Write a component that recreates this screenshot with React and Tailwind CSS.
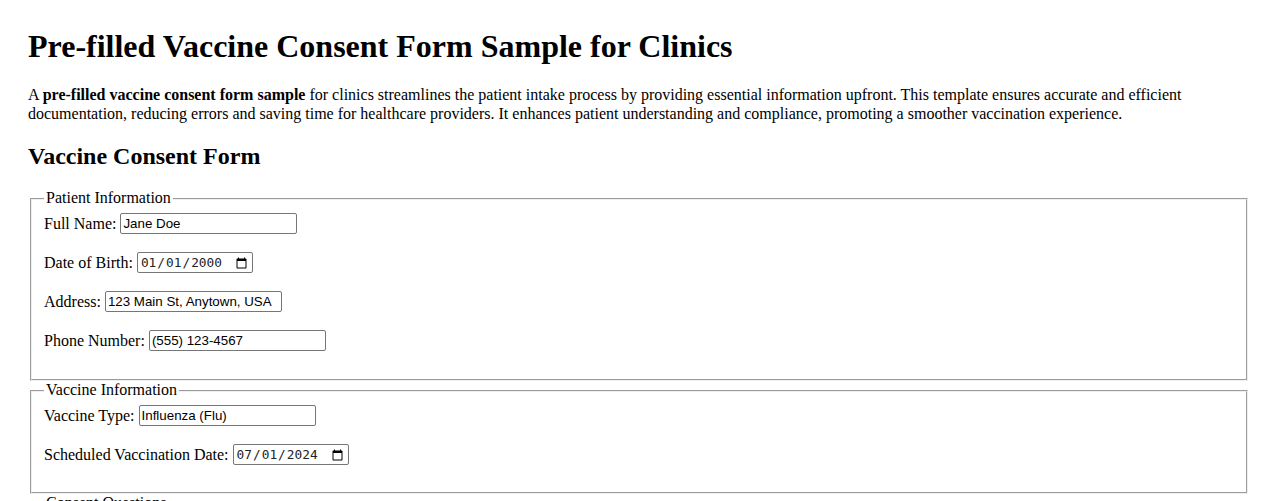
import React from "react";

const serif = { fontFamily: '"Liberation Serif", "Times New Roman", serif' };

// Plain text input, sized like the browser default (size=20)
const TextInput = ({ value }) => (
  <input
    type="text"
    defaultValue={value}
    className="w-[177px] h-[21px] border border-[#767676] rounded-[2px] px-[2px] py-[1px] text-[13.33px] text-black bg-white font-['Liberation_Sans',Arial,sans-serif]"
  />
);

// Date input, native picker kept
const DateInput = ({ value }) => (
  <input
    type="date"
    defaultValue={value}
    className="w-[116px] h-[21px] border border-[#767676] rounded-[2px] px-[2px] py-[1px] text-[12.8px] text-[#222] bg-white font-['DejaVu_Sans_Mono',monospace]"
  />
);

const Row = ({ label, children }) => (
  <div className="flex items-center h-[21px] gap-[4px]">
    <label className="whitespace-nowrap">{label}</label>
    {children}
  </div>
);

const Section = ({ legend, bottom, children }) => (
  <fieldset
    className={`mx-[2px] border-2 [border-style:groove] border-[#efefef] px-3 pt-[5.6px] ${bottom}`}
  >
    <legend className="px-[2px] leading-[18.4px]">{legend}</legend>
    <div className="flex flex-col gap-[18px]">{children}</div>
  </fieldset>
);

export default function App() {
  return (
    <div
      className="bg-white text-black text-[16px] leading-[18.4px] px-[28px] pt-[28px] pb-10 min-h-screen"
      style={serif}
    >
      <h1 className="text-[32px] font-bold leading-[36.8px] mb-[21.44px]">
        Pre-filled Vaccine Consent Form Sample for Clinics
      </h1>
      <p className="mb-[19.92px]">
        A <strong className="font-bold">pre-filled vaccine consent form sample</strong> for
        clinics streamlines the patient intake process by providing essential information
        upfront. This template ensures accurate and efficient documentation, reducing errors
        and saving time for healthcare providers. It enhances patient understanding and
        compliance, promoting a smoother vaccination experience.
      </p>
      <h2 className="text-[24px] font-bold leading-[27.6px] mb-[18.9px]">
        Vaccine Consent Form
      </h2>

      <form>
        <Section legend="Patient Information" bottom="pb-[28px]">
          <Row label="Full Name:">
            <TextInput value="Jane Doe" />
          </Row>
          <Row label="Date of Birth:">
            <DateInput value="2000-01-01" />
          </Row>
          <Row label="Address:">
            <TextInput value="123 Main St, Anytown, USA" />
          </Row>
          <Row label="Phone Number:">
            <TextInput value="(555) 123-4567" />
          </Row>
        </Section>

        <Section legend="Vaccine Information" bottom="pb-[27px]">
          <Row label="Vaccine Type:">
            <TextInput value="Influenza (Flu)" />
          </Row>
          <Row label="Scheduled Vaccination Date:">
            <DateInput value="2024-07-01" />
          </Row>
        </Section>

        <Section legend="Consent Questions" bottom="pb-[28px]">
          <Row label="Do you have any allergies?">
            <TextInput value="None" />
          </Row>
          <Row label="Have you had a reaction to a vaccine before?">
            <TextInput value="No" />
          </Row>
        </Section>
      </form>
    </div>
  );
}
